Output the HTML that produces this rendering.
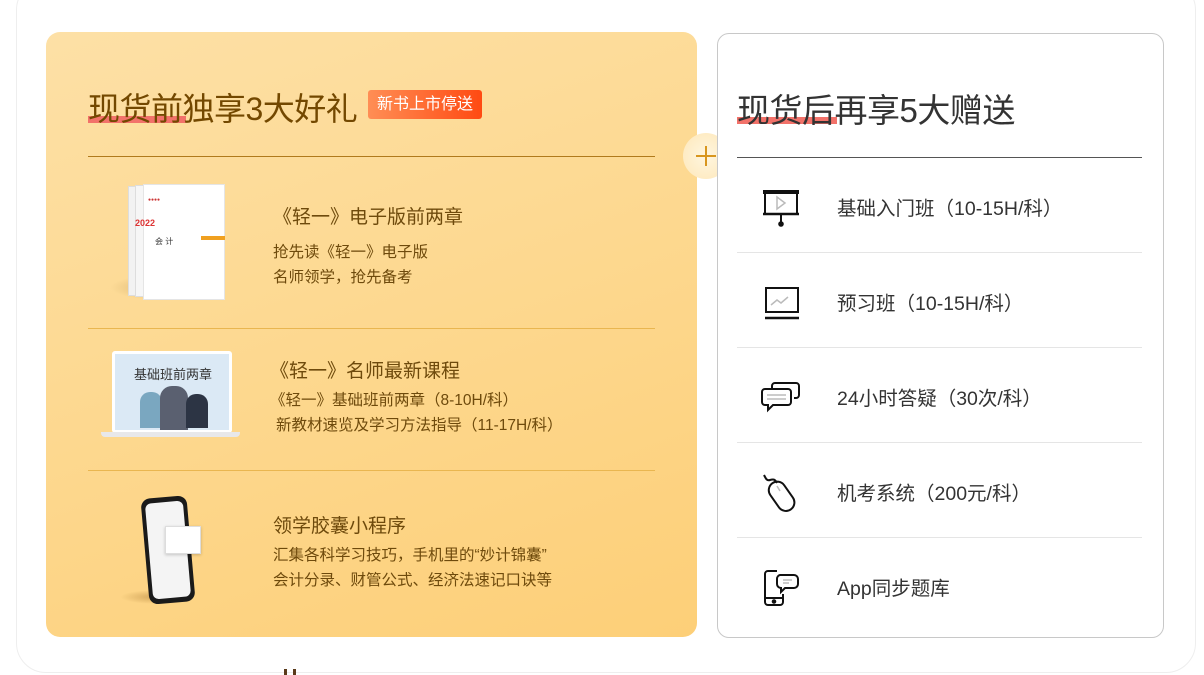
<!DOCTYPE html>
<html><head><meta charset="utf-8"><style>
*{margin:0;padding:0;box-sizing:border-box}
body{width:1204px;height:675px;background:#fff;font-family:"Liberation Sans","Noto Sans CJK SC",sans-serif;position:relative;overflow:hidden}
.outer{position:absolute;left:16px;top:-20px;width:1180px;height:693px;border:1px solid #eee;border-radius:30px;background:#fff}
.left{position:absolute;left:46px;top:32px;width:651px;height:605px;border-radius:14px;background:linear-gradient(160deg,#fde0a6 0%,#fdd88f 50%,#fdcf78 100%)}
.right{position:absolute;left:717px;top:33px;width:447px;height:605px;border:1px solid #c8c8c8;border-radius:12px;background:#fff}
.abs{position:absolute;white-space:nowrap}
.t1{font-size:32px;color:#734800;letter-spacing:-0.5px}
.hl{position:absolute;height:7px;background:#f2726a}
.badge{left:368px;top:90px;width:114px;height:29px;border-radius:3px;background:linear-gradient(90deg,#ff8e55,#ff4a12);color:#fff;font-size:16px;line-height:29px;text-align:center}
.it{font-size:19px;color:#6e4a0c}
.sub{font-size:15.5px;color:#6e4a0c}
.rt{font-size:19.5px;color:#333}
.div{position:absolute;height:1px}
</style></head><body>
<div class="outer"></div>
<div class="left"></div>
<div class="hl" style="left:88px;top:116px;width:98px"></div>
<div class="abs t1" style="left:88px;top:84px">现货前独享3大好礼</div>
<div class="abs badge">新书上市停送</div>
<div class="div" style="left:88px;top:156px;width:567px;background:#b07a1c"></div>
<div class="div" style="left:88px;top:328px;width:567px;background:#e9b650"></div>
<div class="div" style="left:88px;top:470px;width:567px;background:#e9b650"></div>
<div class="abs" style="left:683px;top:133px;width:46px;height:46px;border-radius:50%;background:radial-gradient(circle,#fff6e0,#fde7b8)"></div>
<div class="abs" style="left:696px;top:155px;width:20px;height:2px;background:#d8961e"></div>
<div class="abs" style="left:705px;top:146px;width:2px;height:20px;background:#d8961e"></div>
<div class="abs" style="left:110px;top:275px;width:100px;height:25px;border-radius:50%;background:radial-gradient(ellipse,rgba(150,110,40,.35),transparent 70%)"></div>
<div class="abs" style="left:128px;top:186px;width:10px;height:110px;background:#f2f2f2;border:1px solid #ddd"></div>
<div class="abs" style="left:135px;top:185px;width:10px;height:112px;background:#f6f6f6;border:1px solid #ddd"></div>
<div class="abs" style="left:143px;top:184px;width:82px;height:116px;background:#fff;border:1px solid #e5e5e5"></div>
<div class="abs" style="left:148px;top:197px;font-size:5px;color:#c33">●●●●</div>
<div class="abs" style="left:135px;top:218px;font-size:9px;color:#d33;font-weight:bold">2022</div>
<div class="abs" style="left:155px;top:236px;font-size:8px;color:#333">会 计</div>
<div class="abs" style="left:201px;top:236px;width:24px;height:4px;background:#f0a020"></div>
<div class="abs" style="left:112px;top:351px;width:120px;height:82px;background:#fff;border-radius:3px"></div>
<div class="abs" style="left:115px;top:354px;width:114px;height:76px;background:#dbe9f5"></div>
<div class="abs" style="left:134px;top:364px;font-size:13px;color:#333">基础班前两章</div>
<div class="abs" style="left:140px;top:392px;width:22px;height:36px;border-radius:10px 10px 0 0;background:#7aa7c0"></div>
<div class="abs" style="left:160px;top:386px;width:28px;height:44px;border-radius:12px 12px 0 0;background:#5a6070"></div>
<div class="abs" style="left:186px;top:394px;width:22px;height:34px;border-radius:10px 10px 0 0;background:#2c3444"></div>
<div class="abs" style="left:101px;top:432px;width:139px;height:5px;border-radius:0 0 4px 4px;background:#e8e8ea"></div>
<div class="abs" style="left:120px;top:590px;width:70px;height:14px;border-radius:50%;background:radial-gradient(ellipse,rgba(150,100,30,.4),transparent 70%)"></div>
<div class="abs" style="left:145px;top:497px;width:46px;height:106px;border-radius:9px;background:#1a1a1a;transform:rotate(-5deg)"></div>
<div class="abs" style="left:149px;top:502px;width:38px;height:96px;border-radius:6px;background:#f4f4f4;transform:rotate(-5deg)"></div>
<div class="abs" style="left:165px;top:526px;width:36px;height:28px;background:#fff;border:1px solid #ddd;box-shadow:0 1px 3px rgba(0,0,0,.2)"></div>
<div class="abs it" style="left:273px;top:202px">《轻一》电子版前两章</div>
<div class="abs sub" style="left:273px;top:240px">抢先读《轻一》电子版</div>
<div class="abs sub" style="left:273px;top:265px">名师领学，抢先备考</div>
<div class="abs it" style="left:270px;top:356px">《轻一》名师最新课程</div>
<div class="abs sub" style="left:270px;top:388px">《轻一》基础班前两章（8-10H/科）</div>
<div class="abs sub" style="left:276px;top:413px">新教材速览及学习方法指导（11-17H/科）</div>
<div class="abs it" style="left:273px;top:511px">领学胶囊小程序</div>
<div class="abs sub" style="left:273px;top:543px">汇集各科学习技巧，手机里的“妙计锦囊”</div>
<div class="abs sub" style="left:273px;top:568px">会计分录、财管公式、经济法速记口诀等</div>
<div class="right"></div>
<div class="hl" style="left:737px;top:117px;width:100px"></div>
<div class="abs t1" style="left:737px;top:84px;color:#333;font-size:33px">现货后再享5大赠送</div>
<div class="div" style="left:737px;top:157px;width:405px;background:#555"></div>
<div class="div" style="left:737px;top:252px;width:405px;background:#e5e5e5"></div>
<div class="div" style="left:737px;top:347px;width:405px;background:#e5e5e5"></div>
<div class="div" style="left:737px;top:442px;width:405px;background:#e5e5e5"></div>
<div class="div" style="left:737px;top:537px;width:405px;background:#e5e5e5"></div>
<div class="abs rt" style="left:837px;top:192px">基础入门班（10-15H/科）</div>
<div class="abs rt" style="left:837px;top:287px">预习班（10-15H/科）</div>
<div class="abs rt" style="left:837px;top:382px">24小时答疑（30次/科）</div>
<div class="abs rt" style="left:837px;top:477px">机考系统（200元/科）</div>
<div class="abs rt" style="left:837px;top:572px">App同步题库</div>
<svg class="abs" style="left:755px;top:185px" width="50" height="50" viewBox="0 0 50 50" fill="none" stroke="#111" stroke-width="2">
<path d="M8 6h36M8 8h36"/><rect x="10" y="7" width="32" height="22"/><path d="M8 29h36" stroke-width="2.5"/><path d="M26 30v8"/><circle cx="26" cy="39" r="1.8" fill="#111"/>
<path d="M22 12l8 6-8 6z" stroke="#bbb" stroke-width="1.5"/></svg>
<svg class="abs" style="left:755px;top:280px" width="50" height="50" viewBox="0 0 50 50" fill="none" stroke="#111" stroke-width="2">
<rect x="11" y="8" width="32" height="24"/><path d="M10 38h34" stroke-width="2.5"/><path d="M16 25l6-5 4 3 7-6" stroke="#bbb" stroke-width="1.5"/></svg>
<svg class="abs" style="left:755px;top:375px" width="50" height="50" viewBox="0 0 50 50" fill="none" stroke="#111" stroke-width="2">
<path d="M17 14v-3a3 3 0 0 1 3-3h21a3 3 0 0 1 3 3v9a3 3 0 0 1-3 3h-2"/>
<path d="M10 14h23a3 3 0 0 1 3 3v10a3 3 0 0 1-3 3H18l-5 5v-5h-3a3 3 0 0 1-3-3V17a3 3 0 0 1 3-3z" fill="#fff"/>
<path d="M12 20h19M12 24h19" stroke="#bbb" stroke-width="1.5"/></svg>
<svg class="abs" style="left:755px;top:470px" width="50" height="50" viewBox="0 0 50 50" fill="none" stroke="#111" stroke-width="2">
<path d="M9 5c2 4 3 6 6 5s5-1 7 3"/><rect x="18" y="10" width="17" height="32" rx="8.5" transform="rotate(-35 27 26)"/><path d="M22 16l3 5" stroke="#bbb" stroke-width="1.5"/></svg>
<svg class="abs" style="left:755px;top:565px" width="50" height="50" viewBox="0 0 50 50" fill="none" stroke="#111" stroke-width="2">
<path d="M22 6h-9a3 3 0 0 0-3 3v28a3 3 0 0 0 3 3h12a3 3 0 0 0 3-3v-8"/><path d="M10 33h18"/><circle cx="19" cy="36.5" r="1.3" fill="#111"/>
<path d="M25 10h14a4 4 0 0 1 4 4v5a4 4 0 0 1-4 4h-9l-4 4v-4a4 4 0 0 1-4-4v-5a4 4 0 0 1 3-4z" fill="#fff"/>
<path d="M28 15h9M28 18h6" stroke="#bbb" stroke-width="1.5"/></svg>
<div class="abs" style="left:284px;top:669px;width:3px;height:6px;background:#5a3a1a"></div>
<div class="abs" style="left:293px;top:669px;width:3px;height:6px;background:#5a3a1a"></div>
</body></html>
